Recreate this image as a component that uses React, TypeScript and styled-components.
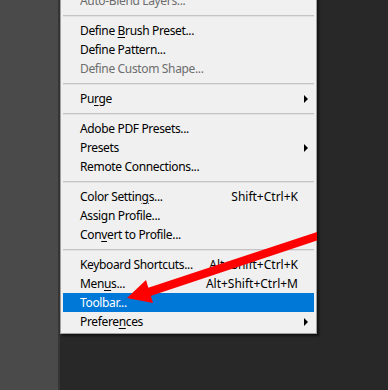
import React from 'react'
import styled, { createGlobalStyle } from 'styled-components'

const GlobalStyle = createGlobalStyle`
  html, body {
    margin: 0;
    padding: 0;
    background: #282828;
    overflow: hidden;
  }
  body {
    font-family: "Noto Sans", "Liberation Sans", sans-serif;
  }
`

const Screen = styled.div`
  position: relative;
  width: 388px;
  height: 390px;
  display: flex;
  overflow: hidden;
  background: #282828;
`

const ToolPanel = styled.div`
  width: 58px;
  flex-shrink: 0;
  background: #4a4a4a;
  border-right: 2px solid #353535;
`

const Workspace = styled.div`
  flex: 1;
  background: #282828;
`

const Menu = styled.div`
  margin-top: -12px;
  padding: 2px;
  box-sizing: border-box;
  width: 257px;
  background: #f0f0f0;
  border: 1px solid #a0a0a0;
  box-shadow: 2px 2px 2px rgba(0, 0, 0, 0.55);
  display: flex;
  flex-direction: column;
`

const Item = styled.div<{ $disabled?: boolean; $active?: boolean }>`
  height: 19px;
  display: flex;
  align-items: center;
  padding: 0 16px 0 17px;
  font-size: 12px;
  letter-spacing: -0.35px;
  line-height: 19px;
  white-space: nowrap;
  color: ${(p) => (p.$active ? '#ffffff' : p.$disabled ? '#6d6d6d' : '#000000')};
  background: ${(p) => (p.$active ? '#0078d7' : 'transparent')};
  position: relative;
`

const Label = styled.span`
  flex: 1;
`

const Shortcut = styled.span`
  text-align: right;
  letter-spacing: 0;
`

const Key = styled.span`
  text-decoration: underline;
  text-underline-offset: 2px;
`

const SubArrow = styled.span`
  position: absolute;
  right: 6px;
  top: 50%;
  margin-top: -4px;
  width: 0;
  height: 0;
  border-top: 4px solid transparent;
  border-bottom: 4px solid transparent;
  border-left: 4px solid #000;
`

const Separator = styled.div`
  height: 11px;
  display: flex;
  align-items: center;
  &::after {
    content: '';
    flex: 1;
    height: 1px;
    background: #c4c4c4;
    border-bottom: 1px solid #e2e2e2;
  }
`

const Overlay = styled.svg`
  position: absolute;
  left: 0;
  top: 0;
  pointer-events: none;
`

type Entry =
  | { sep: true }
  | {
      sep?: false
      label: React.ReactNode
      shortcut?: string
      sub?: boolean
      disabled?: boolean
      active?: boolean
    }

const entries: Entry[] = [
  { label: 'Auto-Blend Layers...', disabled: true },
  { sep: true },
  { label: <>Define <Key>B</Key>rush Preset...</> },
  { label: 'Define Pattern...' },
  { label: 'Define Custom Shape...', disabled: true },
  { sep: true },
  { label: <>Pu<Key>r</Key>ge</>, sub: true },
  { sep: true },
  { label: 'Adobe PDF Presets...' },
  { label: 'Presets', sub: true },
  { label: 'Remote Connections...' },
  { sep: true },
  { label: <>Color Settin<Key>g</Key>s...</>, shortcut: 'Shift+Ctrl+K' },
  { label: 'Assign Profile...' },
  { label: <>Con<Key>v</Key>ert to Profile...</> },
  { sep: true },
  { label: 'Keyboard Shortcuts...', shortcut: 'Alt+Shift+Ctrl+K' },
  { label: <>Men<Key>u</Key>s...</>, shortcut: 'Alt+Shift+Ctrl+M' },
  { label: 'Toolbar...', active: true },
  { label: <>Prefere<Key>n</Key>ces</>, sub: true },
]

const RedArrow = () => (
  <Overlay width="388" height="390" viewBox="0 0 388 390">
    <polygon points="317,232 317,240.6 150.5,296 147.5,288" fill="#fe0000" />
    <polygon points="127,298 146,280 153,303" fill="#fe0000" />
  </Overlay>
)

const App: React.FC = () => {
  return (
    <>
      <GlobalStyle />
      <Screen>
        <ToolPanel />
        <Workspace>
          <Menu>
            {entries.map((e, i) =>
              e.sep ? (
                <Separator key={i} />
              ) : (
                <Item key={i} $disabled={e.disabled} $active={e.active}>
                  <Label>{e.label}</Label>
                  {e.shortcut && <Shortcut>{e.shortcut}</Shortcut>}
                  {e.sub && <SubArrow />}
                </Item>
              )
            )}
          </Menu>
        </Workspace>
        <RedArrow />
      </Screen>
    </>
  )
}

export default App
